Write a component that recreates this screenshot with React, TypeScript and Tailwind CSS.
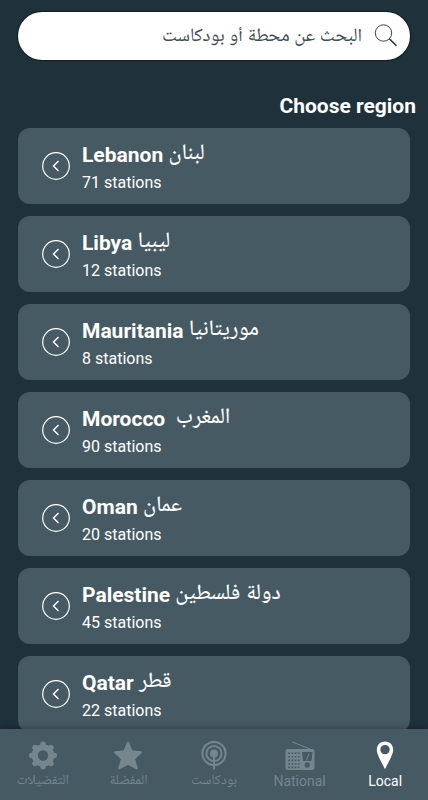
import React, { useState } from 'react';

const regions = [
  { name: 'Lebanon', arabic: 'لبنان', stations: 71 },
  { name: 'Libya', arabic: 'ليبيا', stations: 12 },
  { name: 'Mauritania', arabic: 'موريتانيا', stations: 8 },
  { name: 'Morocco ', arabic: 'المغرب', stations: 90 },
  { name: 'Oman', arabic: 'عمان', stations: 20 },
  { name: 'Palestine', arabic: 'دولة فلسطين', stations: 45 },
  { name: 'Qatar', arabic: 'قطر', stations: 22 },
];

const SearchIcon = () => (
  <svg width="24" height="24" viewBox="0 0 24 24" fill="none" stroke="#1f333c" className="shrink-0">
    <circle cx="9.5" cy="9" r="8.2" strokeWidth="0.9" />
    <path d="M15.4 14.8L22.4 21.8" strokeWidth="1.6" />
  </svg>
);

const GearIcon = () => (
  <svg width="30" height="30" viewBox="0 0 30 30" fill="none" stroke="currentColor">
    <circle cx="15" cy="14.5" r="8.2" strokeWidth="6" />
    <path
      d="M15 3.2V6M15 23V25.8M3.7 14.5H6.5M23.5 14.5H26.3M7 6.5L9 8.5M21 20.5L23 22.5M7 22.5L9 20.5M21 8.5L23 6.5"
      strokeWidth="5.4"
      strokeLinecap="round"
    />
  </svg>
);

const StarIcon = () => (
  <svg width="30" height="30" viewBox="0 0 30 30" fill="currentColor" stroke="currentColor" strokeWidth="2" strokeLinejoin="round">
    <path d="M15 1.6L18.6 10.2L28 11.2L21 17.7L23.8 27.4L15 22.8L6.2 27.4L9 17.7L2 11.2L11.4 10.2Z" />
  </svg>
);

const PodcastIcon = () => (
  <svg width="30" height="30" viewBox="0 0 30 30" fill="none" stroke="currentColor" strokeWidth="2">
    <circle cx="15" cy="12.5" r="11.6" />
    <circle cx="15" cy="12.5" r="7.6" />
    <circle cx="15" cy="12.5" r="4" fill="currentColor" stroke="none" />
    <path d="M15 14V28.5" />
  </svg>
);

const RadioIcon = () => (
  <svg width="30" height="30" viewBox="0 0 30 30" fill="currentColor">
    <path d="M7.5 1L25 8" stroke="currentColor" strokeWidth="1" />
    <path
      fillRule="evenodd"
      d="M3 8H27Q29.5 8 29.5 10.5V26.5Q29.5 29 27 29H3Q.5 29 .5 26.5V10.5Q.5 8 3 8ZM17 11H27.5L26.5 20H18ZM22.2 21.3a2.7 2.7 0 1 0 0 5.4a2.7 2.7 0 1 0 0-5.4Z"
    />
    <path d="M21.3 19.5L24 12.5" stroke="currentColor" strokeWidth="1" />
    <path
      d="M3.2 12.2H14.6M3.2 15.8H14.6M3.2 19.4H14.6M3.2 23H14.6M3.2 26.4H14.6"
      stroke="#465a64"
      strokeWidth="1.6"
      strokeDasharray="1.8 1.4"
    />
  </svg>
);

const PinIcon = () => (
  <svg width="30" height="30" viewBox="0 0 30 30" fill="currentColor">
    <path
      fillRule="evenodd"
      d="M15 .5C10.2 .5 6.8 4.1 6.8 8.5C6.8 12.5 9 16.4 15 28.2C21 16.4 23.2 12.5 23.2 8.5C23.2 4.1 19.8 .5 15 .5ZM15 3.9a4.7 4.7 0 1 1 0 9.4a4.7 4.7 0 1 1 0-9.4Z"
    />
  </svg>
);

const navItems = [
  { id: 'settings', label: 'التفضيلات', icon: <GearIcon /> },
  { id: 'favorites', label: 'المفضلة', icon: <StarIcon /> },
  { id: 'podcast', label: 'بودكاست', icon: <PodcastIcon /> },
  { id: 'national', label: 'National', icon: <RadioIcon /> },
  { id: 'local', label: 'Local', icon: <PinIcon /> },
];

const RegionCard: React.FC<{ name: string; arabic: string; stations: number }> = ({ name, arabic, stations }) => (
  <li>
    <button className="flex h-19 w-full items-center gap-3 rounded-xl bg-[#465a64] pl-6 text-left text-white">
      <svg width="28" height="28" viewBox="0 0 28 28" fill="none" stroke="currentColor" className="shrink-0">
        <circle cx="14" cy="14" r="13.3" strokeWidth="1.2" />
        <path d="M16.5 9L11.5 14L16.5 19" strokeWidth="1.4" />
      </svg>
      <span className="flex min-w-0 flex-col gap-0.5 pt-1">
        <span className="h-7 whitespace-pre text-[21px] leading-7 font-bold">
          {name} <bdi lang="ar" className="text-[22px] leading-6 font-medium">{arabic}</bdi>
        </span>
        <span className="text-base leading-6">{stations} stations</span>
      </span>
    </button>
  </li>
);

export default function App() {
  const [query, setQuery] = useState('');
  const [activeTab, setActiveTab] = useState('local');

  return (
    <div className="flex h-screen flex-col bg-[#1f313a] font-[Roboto,'Noto_Naskh_Arabic_UI','Noto_Naskh_Arabic','DejaVu_Sans',sans-serif] text-white">
      <header className="px-[18px] pt-3 pb-3">
        <label className="flex h-12 items-center gap-3 rounded-full bg-white px-3 shadow-[0_0_1px_1px_#101c22]" dir="rtl">
          <SearchIcon />
          <input
            type="search"
            aria-label="البحث عن محطة أو بودكاست"
            placeholder="البحث عن محطة أو بودكاست"
            value={query}
            onChange={(e) => setQuery(e.target.value)}
            className="min-w-0 flex-1 bg-transparent pt-1 text-[19px] text-[#1f333c] outline-none placeholder:text-[#3c4e57]"
          />
        </label>
      </header>

      <main className="min-h-0 flex-1 overflow-hidden">
        <h1 className="px-3 pt-5 pb-2 text-right text-[21px] leading-7 font-bold">Choose region</h1>
        <ul className="flex flex-col gap-3 px-[18px]">
          {regions.map((region) => (
            <RegionCard key={region.name} {...region} />
          ))}
        </ul>
      </main>

      <nav className="relative grid h-[71px] shrink-0 grid-cols-5 bg-[#465a64] shadow-[0_-1px_6px_rgba(0,0,0,0.3)]">
        {navItems.map((item) => (
          <button
            key={item.id}
            onClick={() => setActiveTab(item.id)}
            className={`flex flex-col items-center pt-3 ${activeTab === item.id ? 'text-white' : 'text-[#75868d]'}`}
          >
            {item.icon}
            <span className="text-sm leading-5">{item.label}</span>
          </button>
        ))}
      </nav>
    </div>
  );
}
